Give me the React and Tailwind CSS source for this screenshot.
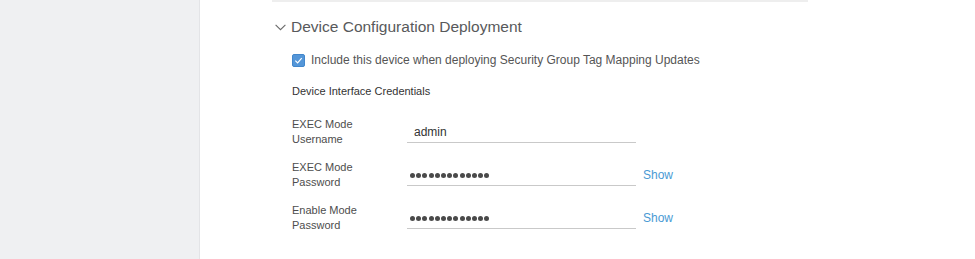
// credential rows
const rows = [
  { label: ["EXEC Mode", "Username"], value: "admin" },
  { label: ["EXEC Mode", "Password"], secret: true },
  { label: ["Enable Mode", "Password"], secret: true },
];

const Dots = () => (
  <div className="flex items-center gap-[1.2px] h-[16px]">
    {Array.from({ length: 13 }).map((_, i) => (
      <span key={i} className="block w-[5px] h-[5px] rounded-full bg-[#4a4a4a]" />
    ))}
  </div>
);

const App = () => {
  return (
    <div
      className="flex w-[975px] h-[259px] overflow-hidden bg-white"
      style={{ fontFamily: '"Liberation Sans", Arial, sans-serif' }}
    >
      {/* left rail */}
      <aside className="w-[200px] shrink-0 bg-[#eff0f2] border-r border-[#e3e4e7]"></aside>

      <main className="flex-1">
        <div className="ml-[72px] w-[536px] border-t-2 border-[#eeeeee]">
          {/* section header */}
          <div className="flex items-center pt-[15px]">
            <div className="w-[19px] pl-[3px]">
              <svg width="11" height="7" viewBox="0 0 11 7" fill="none">
                <path d="M0.6 0.8 L5.5 5.7 L10.4 0.8" stroke="#6b6b6b" strokeWidth="1.1" />
              </svg>
            </div>
            <h2 className="text-[15.5px] leading-[20px] text-[#58595b]">
              Device Configuration Deployment
            </h2>
          </div>

          <div className="pl-[20px]">
            {/* checkbox */}
            <label className="mt-[15px] flex items-center gap-[6px] h-[16px]">
              <span className="flex items-center justify-center w-[13px] h-[13px] rounded-[2px] bg-[#5496d8] border border-[#4287cc]">
                <svg width="9" height="9" viewBox="0 0 10 10" fill="none">
                  <path d="M1.5 5.2 L4 7.6 L8.6 2.4" stroke="white" strokeWidth="1.3" />
                </svg>
              </span>
              <span className="text-[12px] leading-[16px] text-[#555]">
                Include this device when deploying Security Group Tag Mapping Updates
              </span>
            </label>

            <h3 className="mt-[16px] text-[11px] leading-[14px] text-[#333]">
              Device Interface Credentials
            </h3>

            {/* credentials */}
            <div className="mt-[19px] flex flex-col gap-[13px]">
              {rows.map((row, idx) => (
                <div key={idx} className="flex items-start">
                  <div className="w-[115px] text-[11px] leading-[15px] text-[#4d4d4d]">
                    <div>{row.label[0]}</div>
                    <div>{row.label[1]}</div>
                  </div>
                  <div className="mt-[7px] w-[229px] pl-[3px] pb-[2px] border-b border-[#c9c9c9]">
                    {row.secret ? (
                      <Dots />
                    ) : (
                      <div className="pl-[4px] text-[12px] leading-[16px] text-[#333]">
                        {row.value}
                      </div>
                    )}
                  </div>
                  {row.secret && (
                    <span className="mt-[7px] ml-[7px] text-[12px] leading-[16px] text-[#4a9ad4]">
                      Show
                    </span>
                  )}
                </div>
              ))}
            </div>
          </div>
        </div>
      </main>
    </div>
  );
};

export default App;
